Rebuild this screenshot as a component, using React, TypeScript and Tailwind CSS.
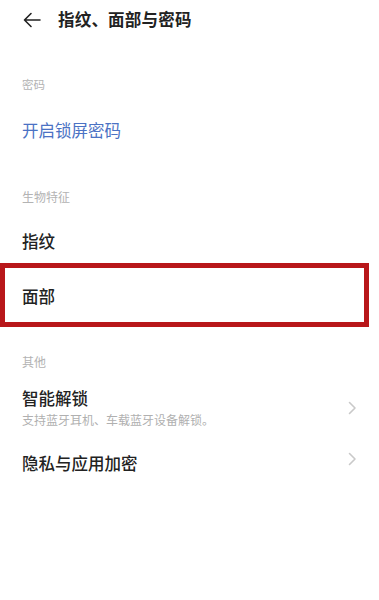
import React from "react";

const font = { fontFamily: '"Noto Sans CJK SC", "Noto Sans", sans-serif' };

function Chevron() {
  return (
    <svg width="9" height="14" viewBox="0 0 9 14" fill="none">
      <polyline points="1.5,1.5 7,7 1.5,12.5" stroke="#c9c9c9" strokeWidth="1.6" strokeLinecap="round" strokeLinejoin="round" />
    </svg>
  );
}

export default function App() {
  return (
    <div className="w-[379px] h-[600px] bg-white overflow-hidden text-[#222]" style={font}>
      {/* header */}
      <div className="h-[39px] flex items-center pl-[23px]">
        <svg width="18" height="16" viewBox="0 0 18 16" fill="none">
          <path d="M17 8H1.5M8 1.5L1.5 8L8 14.5" stroke="#222" strokeWidth="1.6" strokeLinecap="round" strokeLinejoin="round" />
        </svg>
        <div className="ml-[17px] text-[16.5px] font-semibold leading-none tracking-[0.2px]">指纹、面部与密码</div>
      </div>

      <div className="mt-[35px] h-[22px] flex items-center pl-[22px] text-[11.5px] text-[#b3b3b3]">密码</div>
      <div className="mt-[12px] h-[44px] flex items-center pl-[22px] text-[16.5px] text-[#4b72c4]">开启锁屏密码</div>

      <div className="mt-[34px] h-[22px] flex items-center pl-[22px] text-[12px] text-[#b3b3b3]">生物特征</div>
      <div className="mt-[11px] h-[44px] flex items-center pl-[22px] text-[16.5px] font-medium">指纹</div>
      <div className="w-[369px] h-[64px] border-[5px] border-[#b8171a] flex items-center pl-[17px] text-[16.5px] font-medium pt-[2px]">面部</div>

      <div className="mt-[24px] h-[22px] flex items-center pl-[22px] text-[12px] text-[#b3b3b3]">其他</div>
      <div className="mt-[14px] flex items-center pl-[22px] pr-[22px]">
        <div className="flex-1 flex flex-col">
          <div className="h-[22px] flex items-center text-[16.5px] font-medium">智能解锁</div>
          <div className="mt-[3px] h-[16px] flex items-center text-[12px] text-[#b0b0b0]">支持蓝牙耳机、车载蓝牙设备解锁。</div>
        </div>
        <div className="pt-[1px]"><Chevron /></div>
      </div>
      <div className="mt-[13px] h-[44px] flex items-center pl-[22px] pr-[22px]">
        <div className="flex-1 text-[16.5px] font-medium">隐私与应用加密</div>
        <div className="-mt-[8px]"><Chevron /></div>
      </div>
    </div>
  );
}
